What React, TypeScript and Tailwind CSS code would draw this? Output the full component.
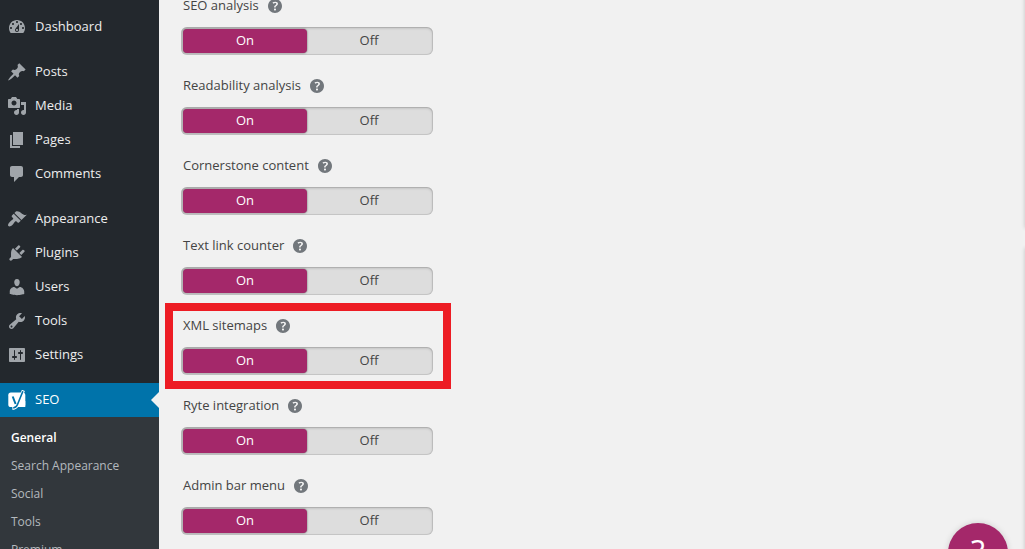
import clsx from "clsx";

interface MenuItem {
  label: string;
  icon: string;
}

const menuGroups: MenuItem[][] = [
  [
    {
      label: "Dashboard",
      icon: "M3.76 16h12.48c1.1-1.37 1.76-3.11 1.76-5 0-4.42-3.58-8-8-8s-8 3.58-8 8c0 1.89.66 3.63 1.76 5zM10 4c.55 0 1 .45 1 1s-.45 1-1 1-1-.45-1-1 .45-1 1-1zM6 6c.55 0 1 .45 1 1s-.45 1-1 1-1-.45-1-1 .45-1 1-1zm8 0c.55 0 1 .45 1 1s-.45 1-1 1-1-.45-1-1 .45-1 1-1zm-5.37 5.55L12 7v6c0 1.1-.9 2-2 2s-2-.9-2-2c0-.57.24-1.08.63-1.45zM4 10c.55 0 1 .45 1 1s-.45 1-1 1-1-.45-1-1 .45-1 1-1zm12 0c.55 0 1 .45 1 1s-.45 1-1 1-1-.45-1-1 .45-1 1-1zm-5 3c0-.55-.45-1-1-1s-1 .45-1 1 .45 1 1 1 1-.45 1-1z",
    },
  ],
  [
    {
      label: "Posts",
      icon: "M10.44 3.02l1.82-1.82 6.36 6.35-1.83 1.82c-1.05-.68-2.48-.57-3.41.36l-.75.75c-.92.93-1.04 2.35-.35 3.41l-1.83 1.82-2.41-2.41-2.8 2.79c-.42.42-3.38 2.71-3.8 2.29s1.86-3.39 2.28-3.81l2.79-2.79L4.1 9.36l1.83-1.82c1.05.69 2.48.57 3.4-.36l.75-.75c.93-.92 1.05-2.35.36-3.41z",
    },
    {
      label: "Media",
      icon: "M13 11V4c0-.55-.45-1-1-1h-1.67L9 1H5L3.67 3H2c-.55 0-1 .45-1 1v7c0 .55.45 1 1 1h10c.55 0 1-.45 1-1zM7 4.5c1.38 0 2.5 1.12 2.5 2.5S8.38 9.5 7 9.5 4.5 8.38 4.5 7 5.62 4.5 7 4.5zM14 6h5v10.5c0 1.38-1.12 2.5-2.5 2.5S14 17.88 14 16.5s1.12-2.5 2.5-2.5c.17 0 .34.02.5.05V9h-3V6zm-4 8.05V13h2v3.5c0 1.38-1.12 2.5-2.5 2.5S7 17.88 7 16.5 8.12 14 9.5 14c.17 0 .34.02.5.05z",
    },
    {
      label: "Pages",
      icon: "M6 15V2h10v13H6zm-1 1h8v2H3V5h2v11z",
    },
    {
      label: "Comments",
      icon: "M5 2h9c1.1 0 2 .9 2 2v7c0 1.1-.9 2-2 2h-2l-5 5v-5H5c-1.1 0-2-.9-2-2V4c0-1.1.9-2 2-2z",
    },
  ],
  [
    {
      label: "Appearance",
      icon: "M14.48 11.06L7.41 3.99l1.5-1.5c.5-.56 2.3-.47 3.51.32 1.21.8 1.43 1.28 2.91 2.1 1.18.64 2.45 1.26 4.45.85zm-.71.71L6.7 4.7 4.93 6.47c-.39.39-.39 1.02 0 1.41l1.06 1.06c.39.39.39 1.03 0 1.42-.6.6-1.43 1.11-2.21 1.69-.35.26-.7.53-1.01.84C1.43 14.23.4 16.08 1.4 17.07c.99 1 2.84-.03 4.18-1.36.31-.31.58-.66.85-1.02.57-.78 1.08-1.61 1.69-2.21.39-.39 1.02-.39 1.41 0l1.06 1.06c.39.39 1.02.39 1.41 0z",
    },
    {
      label: "Plugins",
      icon: "M13.11 4.36L9.87 7.6 8 5.73l3.24-3.24c.35-.34 1.05-.2 1.56.32.52.51.66 1.21.31 1.55zm-8 1.77l.91-1.12 9.01 9.01-1.19.84c-.71.71-2.63 1.16-3.82 1.16H6.14L4.9 17.26c-.59.59-1.54.59-2.12 0-.59-.58-.59-1.53 0-2.12l1.24-1.24v-3.88c0-1.13.4-3.19 1.09-3.89zm7.26 3.97l3.24-3.24c.34-.35 1.04-.21 1.55.31.52.51.66 1.21.31 1.55l-3.24 3.25z",
    },
    {
      label: "Users",
      icon: "M10 9.25c-2.27 0-2.73-3.44-2.73-3.44C7 4.02 7.82 2 9.97 2c2.16 0 2.98 2.02 2.71 3.81 0 0-.41 3.44-2.68 3.44zm0 2.57L12.72 10c2.39 0 4.52 2.33 4.52 4.53v2.49s-3.65 1.13-7.24 1.13c-3.65 0-7.24-1.13-7.24-1.13v-2.49c0-2.25 1.94-4.48 4.47-4.48z",
    },
    {
      label: "Tools",
      icon: "M16.68 9.77c-1.34 1.34-3.3 1.67-4.95.99l-5.41 6.52c-.99.99-2.59.99-3.58 0s-.99-2.59 0-3.57l6.52-5.42c-.68-1.65-.35-3.61.99-4.95 1.28-1.28 3.12-1.62 4.72-1.06l-2.89 2.89 2.82 2.82 2.86-2.87c.53 1.58.18 3.39-1.08 4.65zM3.81 16.21c.4.39 1.04.39 1.43 0 .4-.4.4-1.04 0-1.43-.39-.4-1.03-.4-1.43 0-.39.39-.39 1.03 0 1.43z",
    },
    {
      label: "Settings",
      icon: "M18 16V4c0-.55-.45-1-1-1H3c-.55 0-1 .45-1 1v12c0 .55.45 1 1 1h14c.55 0 1-.45 1-1zM8 11h1c.55 0 1 .45 1 1s-.45 1-1 1H8v1.5c0 .28-.22.5-.5.5s-.5-.22-.5-.5V13H6c-.55 0-1-.45-1-1s.45-1 1-1h1V5.5c0-.28.22-.5.5-.5s.5.22.5.5V11zm5-2h-1c-.55 0-1-.45-1-1s.45-1 1-1h1V5.5c0-.28.22-.5.5-.5s.5.22.5.5V7h1c.55 0 1 .45 1 1s-.45 1-1 1h-1v5.5c0 .28-.22.5-.5.5s-.5-.22-.5-.5V9z",
    },
  ],
];

const seoPages = ["General", "Search Appearance", "Social", "Tools", "Premium"];

const features = [
  { id: "seo-analysis", label: "SEO analysis" },
  { id: "readability", label: "Readability analysis" },
  { id: "cornerstone", label: "Cornerstone content" },
  { id: "link-counter", label: "Text link counter" },
  { id: "sitemaps", label: "XML sitemaps", highlighted: true },
  { id: "ryte", label: "Ryte integration" },
  { id: "admin-bar", label: "Admin bar menu" },
];

export default function App() {
  return (
    <div className="relative flex h-screen overflow-hidden bg-[#f1f1f1] font-['Open_Sans','Noto_Sans',sans-serif]">
      <Sidebar />

      <main className="min-w-0 flex-1 pl-[22px]">
        <div className="-mt-1">
          {features.map((feature) => (
            <FeatureToggle key={feature.id} {...feature} />
          ))}
        </div>
      </main>

      {/* Edges of the promo boxes that sit past the right side */}
      <div className="absolute -top-4 left-full h-[244px] w-4 shadow-[0_0_4px_rgba(0,0,0,0.2)]" />
      <div className="absolute top-[248px] left-full h-full w-4 shadow-[0_0_4px_rgba(0,0,0,0.2)]" />

      <button
        type="button"
        aria-label="Open help"
        className="absolute right-[17px] -bottom-[34px] flex size-[60px] justify-center rounded-full bg-[#a4286a] pt-[13px] text-[32px] leading-8 text-white shadow-[0_0_6px_rgba(0,0,0,0.15)]"
      >
        ?
      </button>
    </div>
  );
}

function Sidebar() {
  return (
    <nav className="w-[159px] shrink-0 bg-[#23282d] pt-[10px] text-[13px] text-[#eee]">
      {menuGroups.map((group) => (
        <ul key={group[0].label} className="mb-[11px]">
          {group.map((item) => (
            <li key={item.label}>
              <a href="#" className="flex h-[34px] items-center gap-2 pl-[7px]">
                <svg
                  viewBox="0 0 20 20"
                  className="size-5 shrink-0 fill-[#a0a5aa]"
                >
                  <path d={item.icon} />
                </svg>
                {item.label}
              </a>
            </li>
          ))}
        </ul>
      ))}

      <a
        href="#"
        className="relative flex h-[34px] items-center gap-2 bg-[#0073aa] pl-[7px] text-white"
      >
        <YoastIcon />
        SEO
        {/* Current item arrow */}
        <span className="absolute top-[9px] right-0 border-y-8 border-r-8 border-y-transparent border-r-[#f1f1f1]" />
      </a>
      <ul className="bg-[#32373c] py-[7px] text-xs text-[#b4b9be]">
        {seoPages.map((page, index) => (
          <li key={page}>
            <a
              href="#"
              className={clsx(
                "flex h-7 items-center pl-[11px]",
                index === 0 && "font-semibold text-white",
              )}
            >
              {page}
            </a>
          </li>
        ))}
      </ul>
    </nav>
  );
}

function YoastIcon() {
  return (
    <svg viewBox="0 0 20 20" className="size-5 shrink-0" fill="none">
      <rect x="1.3" y="2.6" width="17" height="14.4" rx="2.6" fill="#fff" />
      <path d="M13 17h5.3v-6H13z" fill="#fff" />
      <path
        d="M16.4.4L10.6 14.600c-.9 2.200-2.300 3.500-5.200 3.700"
        stroke="#fff"
        strokeWidth="3.2"
      />
      <path
        d="M15.900 1.200L10.500 14.500c-.8 2-2 3.100-4.300 3.500"
        stroke="#0073aa"
        strokeWidth="1.6"
      />
      <path d="M5.700 6.500l2.900 7.500" stroke="#0073aa" strokeWidth="2" />
    </svg>
  );
}

function FeatureToggle({
  id,
  label,
  highlighted,
}: {
  id: string;
  label: string;
  highlighted?: boolean;
}) {
  return (
    <fieldset
      aria-labelledby={`${id}-label`}
      className="relative mb-[21px] w-[252px] text-[13px]"
    >
      {highlighted && (
        <div className="pointer-events-none absolute -top-[13px] -right-[18px] -bottom-[14px] -left-4 border-8 border-[#ed1c24]" />
      )}
      <div className="mb-[11px] flex h-5 items-center gap-[6px] pl-[2px] text-[#444]">
        <span id={`${id}-label`}>{label}</span>
        <button type="button" aria-label={`Help on ${label}`}>
          <svg viewBox="0 0 20 20" className="size-5 fill-[#72777c]">
            <path d="M17 10c0-3.87-3.14-7-7-7-3.87 0-7 3.13-7 7s3.13 7 7 7c3.86 0 7-3.13 7-7zm-6.3 1.48H9.14v-.43c0-.38.08-.7.24-.98s.46-.57.88-.89c.41-.29.68-.53.81-.71.14-.18.2-.39.2-.62 0-.25-.09-.44-.28-.58-.19-.13-.45-.19-.79-.19-.58 0-1.25.19-2 .57l-.64-1.28c.87-.49 1.8-.74 2.77-.74.81 0 1.45.2 1.92.58.48.39.71.91.71 1.55 0 .43-.09.8-.29 1.11-.19.32-.57.67-1.11 1.06-.38.28-.61.49-.71.63-.1.15-.15.34-.15.57v.35zm-1.47 2.74c-.18-.17-.27-.42-.27-.73 0-.33.08-.58.26-.75s.43-.25.77-.25c.32 0 .57.09.75.26s.27.42.27.74c0 .3-.09.55-.27.72-.18.18-.43.27-.75.27-.33 0-.58-.09-.76-.26z" />
          </svg>
        </button>
      </div>

      <div className="flex h-7 rounded-md bg-[#ddd] p-0.5 shadow-[inset_0_1px_3px_rgba(0,0,0,0.2),inset_0_0_0_1px_rgba(0,0,0,0.08)]">
        {["On", "Off"].map((option) => (
          <label
            key={option}
            htmlFor={`${id}-${option}`}
            className="flex flex-1 items-center justify-center rounded-sm text-[#444] has-checked:bg-[#a4286a] has-checked:text-white has-checked:shadow-[0_0_2px_rgba(0,0,0,0.6)]"
          >
            <input
              type="radio"
              id={`${id}-${option}`}
              name={id}
              defaultChecked={option === "On"}
              className="sr-only"
            />
            {option}
          </label>
        ))}
      </div>
    </fieldset>
  );
}
